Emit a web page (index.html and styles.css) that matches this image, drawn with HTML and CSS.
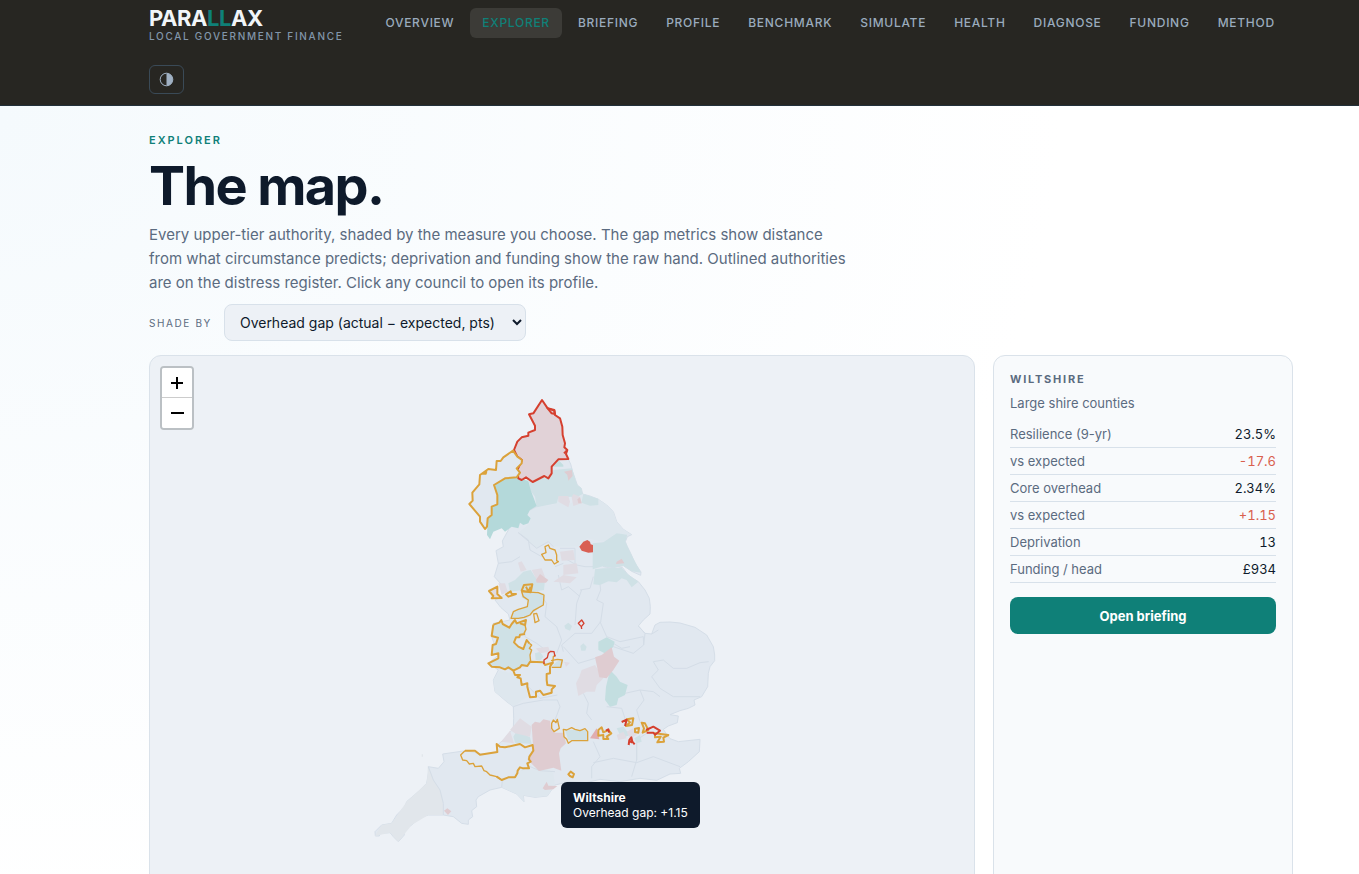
FILE: index.html
```html
<!DOCTYPE html>
<html lang="en">
<head>
<meta charset="utf-8">
<title>Parallax – Explorer</title>
<link rel="stylesheet" href="styles.css">
</head>
<body>
<header class="site-header">
  <div class="wrap header-row">
    <a class="brand" href="#">
      <span class="brand-name">PARA<span class="brand-accent">LL</span>AX</span>
      <span class="brand-sub">Local government finance</span>
    </a>
    <nav class="nav">
      <a href="#">Overview</a>
      <a href="#" class="active">Explorer</a>
      <a href="#">Briefing</a>
      <a href="#">Profile</a>
      <a href="#">Benchmark</a>
      <a href="#">Simulate</a>
      <a href="#">Health</a>
      <a href="#">Diagnose</a>
      <a href="#">Funding</a>
      <a href="#">Method</a>
    </nav>
    <button class="theme-toggle" type="button" aria-label="Toggle theme">
      <svg width="15" height="15" viewBox="0 0 15 15" aria-hidden="true"><circle cx="7.5" cy="7.5" r="6.3" fill="none" stroke="currentColor" stroke-width="1"/><path d="M7.5 1.2a6.3 6.3 0 0 1 0 12.6z" fill="currentColor"/></svg>
    </button>
  </div>
</header>
<main class="wrap main">
  <p class="eyebrow">Explorer</p>
  <h1>The map.</h1>
  <p class="lead">Every upper-tier authority, shaded by the measure you choose. The gap metrics show distance from what circumstance predicts; deprivation and funding show the raw hand. Outlined authorities are on the distress register. Click any council to open its profile.</p>
  <div class="controls">
    <label for="metric">Shade by</label>
    <select id="metric"><option>Overhead gap (actual − expected, pts)</option></select>
  </div>
  <div class="layout">
    <section class="map" aria-label="Map of England">
      <div class="map-canvas">
        <svg class="england" viewBox="-870 -102 2472 1860" aria-hidden="true">
          <path class="base" d="M385 208L392 222 398 245 406 268 412 285 424 295 428 312 450 318 475 328 500 345 520 365 530 395 550 418 575 434 562 440 556 455 562 470 572 490 585 520 603 546 602 556 575 544 550 527 520 533 489 529 520 537 547 532 563 553 576 563 595 575 615 600 628 625 631 650 630 672 610 690 595 708 615 730 635 732 645 705 660 697 690 696 720 699 765 712 800 735 820 770 824 795 824 812 810 830 805 850 803 890 785 920 762 930 765 945 745 955 720 962 690 974 715 978 712 998 685 1008 670 1018 678 1030 690 1046 715 1055 780 1048 778 1085 745 1115 718 1135 722 1150 690 1152 650 1171 600 1165 540 1175 480 1168 440 1178 390 1175 345 1185 322 1218 285 1222 250 1216 252 1235 230 1212 185 1192 150 1200 115 1220 108 1230 110 1250 95 1262 98 1280 85 1290 85 1303 65 1300 40 1280 10 1275-35 1275-60 1283-85 1305-110 1322-107 1335-125 1355-140 1340-150 1328-180 1330-182 1338-194 1338-195 1325-175 1305-145 1300-130 1275-105 1250-100 1235-65 1205-40 1180-35 1150-35 1130-5 1135 12 1115 8 1092 78 1082 125 1092 172 1088 172 1065 190 1050 220 1015 221 985 220 950 200 935 165 905 160 870 175 840 145 820 175 795 155 740 160 700 210 690 205 672 182 652 165 630 185 620 205 608 190 590 163 560 175 520 168 482 190 470 187 453 205 420 270 270 335 230 350 208Z"/>
          <path class="pale" d="M270 360L290 350 340 345 355 325 390 342 428 312 475 328 500 345 520 365 530 395 550 418 575 434 530 430 490 455 440 445 430 470 360 470 340 470 325 455 290 475 235 428 270 400ZM165 905L160 870 180 842 220 850 265 890 262 920 220 950Z"/>
          <path class="corn" d="M-35 1130L-20 1170 0 1200 10 1240 10 1275-35 1275-85 1305-125 1355-150 1328-195 1338-175 1305-145 1300-100 1235-40 1180Z"/>
          <path class="pale" d="M185 1168L245 1140 320 1135 340 1150 345 1185 322 1218 285 1222 250 1216 252 1235 230 1212 185 1192Z"/>
          <g class="line">
            <path d="M-35 1130L-20 1170 0 1200 10 1240 10 1275M185 1192L187 1170M245 1140L270 1130 300 1142 345 1145M480 583L482 600 470 630 490 640 482 695 455 730 405 730 365 765 370 785M405 705L410 640 425 600M300 545L290 600 320 640 315 680 350 710 365 750 350 790M480 695L500 740 540 755 610 740 611 765 580 790 520 770M258 700L255 740 290 760 330 790M520 760L545 775 570 770M595 708L615 730 611 765M635 732L655 720M640 815L670 810 700 835 740 835 780 818 806 815M640 815L655 840 635 860 660 895 700 920 780 920M555 910L600 900 640 905 660 920M600 900L612 930 590 960 600 995M352 930L360 950 345 990M430 910L445 940 440 970 455 990M500 950L545 955 560 1000M220 950L250 940 310 930 352 930M460 1055L480 1100 455 1130 455 1165M460 1118L520 1105 590 1118 640 1100 720 1130M590 1060L590 1110 575 1160M235 428L265 450 270 480 305 500M175 520L215 515 240 500M360 475L405 475 405 545M365 500L410 525 435 530 460 530M355 555L365 600 385 590 420 620M345 530L370 520M460 560L450 595 420 600M270 360L290 350 355 325M235 428L290 475 325 455 340 470M265 890L300 925 352 915M370 770L415 820 465 805M620 1030L590 1050 590 1110"/>
          </g>
          <g class="teal-l">
            <path d="M268 275L300 265 325 262 340 240 396 235 406 268 412 285 424 295 428 312 405 325 395 320 355 322 350 340 290 352 285 320 270 300Z"/>
            <path d="M430 312L475 326 475 345 450 347 424 338Z"/>
            <path d="M458 460L490 457 530 430 562 434 556 455 572 490 603 548 575 544 550 527 520 533 489 529 458 538Z"/>
            <path d="M465 538L490 535 545 533 563 553 595 575 575 592 560 570 545 565 530 577 505 574 480 585 460 583Z"/>
            <path d="M205 580L225 570 250 545 272 540 285 560 315 570 312 600 280 605 245 600 210 605Z"/>
            <path d="M245 600L312 610 312 642 260 685 213 688 220 665 262 650 265 635 245 622Z"/>
            <path d="M285 790L300 785 310 800 300 812 287 810ZM373 707L385 698 396 708 390 722 376 716ZM421 768L430 760 440 770 436 782 424 782Z"/>
            <path d="M160 704L178 698 184 690 188 702 208 713 225 690 230 700 258 690 256 705 256 732 228 742 222 757 235 770 250 777 260 750 268 760 275 780 270 795 272 815 270 825 240 832 220 842 180 832 155 830 145 820 175 805 175 790 155 795 158 765 168 762 174 743 155 738Z"/>
            <path d="M220 1040L230 1023 245 1030 270 1042 275 1062 225 1058Z"/>
            <path d="M350 815L368 808 366 832 335 830ZM375 1020L440 1020 445 1052 385 1050ZM530 1015L550 1010 570 1035 545 1045ZM583 1045L600 1035 605 1055 590 1060Z"/>
          </g>
          <g class="teal-m">
            <path d="M510 840L530 860 540 875 563 885 555 915 535 925 530 945 510 950 495 930 498 890Z"/>
            <path d="M475 755L500 742 524 755 520 770 498 792 475 780ZM340 230L355 210 370 225 370 230Z"/>
          </g>
          <g class="pink-l">
            <path d="M355 318L385 318 390 335 385 352 355 335ZM395 322L400 312 420 320 425 340 400 348Z"/>
            <path d="M234 518L245 514 260 540 242 545ZM275 540L305 535 315 560 290 570ZM340 575L370 555 410 562 390 580ZM175 580L195 580 203 605 185 615ZM360 485L400 480 405 510 365 512ZM370 525L410 520 415 550 370 555Z"/>
            <path d="M425 840L465 825 490 865 470 885 465 905 440 905 415 918 408 880 418 860ZM288 775L325 770 330 785 300 790ZM372 815L390 818 378 830Z"/>
            <path d="M210 1020L240 985 275 1010 270 1040 225 1030ZM183 1055L210 1022 222 1060Z"/>
            <path d="M530 1035L550 1025 560 1045 535 1050ZM560 1025L580 1015 590 1035 570 1045Z"/>
          </g>
          <g class="pink-m">
            <path d="M465 802L485 795 515 772 522 800 538 812 520 840 500 865 478 862Z"/>
            <path d="M372 245L396 240 398 258 385 272 382 255ZM412 328L420 322 425 340 415 340ZM530 515L545 506 553 520 528 522ZM288 570L300 552 325 570 318 578 290 578Z"/>
            <path d="M275 1005L285 995 300 998 310 988 330 992 333 1018 345 1028 370 1028 378 1060 362 1075 357 1090 364 1142 340 1133 297 1143 262 1108 280 1080Z"/>
            <path d="M308 1195L320 1175 325 1187 352 1188 340 1198 315 1200ZM12 1262L22 1255 34 1264 24 1275Z"/>
          </g>
          <path class="coral" d="M450 1045L470 1015 478 1048Z"/>
          <path class="teal" d="M232 262L245 268 265 272 272 300 290 348 270 360 262 375 272 385 265 400 250 405 240 398 235 415 215 410 195 425 185 415 160 425 150 448 141 435 143 385 155 350 172 343 172 315 162 285 195 265Z"/>
          <path class="red-fill" d="M418 470L430 455 442 450 450 455 452 463 459 465 459 487 445 488 425 482Z"/>
          <path class="northumberland" d="M306 30L323 55 343 62 345 75 360 85 367 110 368 135 375 160 373 172 382 180 378 192 385 207 355 208 335 230 335 250 325 265 313 258 278 276 258 262 245 270 235 265 232 240 246 210 232 200 222 180 232 155 245 142 265 137 265 128 285 120 285 107 267 73 280 70Z"/>
          <g class="amber">
            <path class="cumbria" d="M219 182L190 202 182 213 170 213 168 240 145 237 120 255 118 283 97 308 98 332 88 342 120 380 120 395 135 417 141 410 143 385 155 375 155 350 172 343 172 315 162 285 195 265 230 262 240 248 230 235 245 220 246 210 232 200Z"/>
            <path class="thin" d="M128 252L140 245 138 252ZM305 493L318 488 315 470 325 465 330 475 345 480 350 495 350 512 355 515 343 522 335 510 315 510Z"/>
            <path class="shade" d="M147 603L172 590 172 612 185 624 155 625 160 618Z"/>
            <path d="M198 613L212 604 215 612 228 612 205 620ZM252 585L277 583 272 607 245 602ZM258 590L265 605 272 590"/>
            <path class="thin" d="M245 605L250 620 265 630 262 650 245 655 235 658 220 665 213 685 235 685 252 682 270 675 280 662 310 645 312 615 295 608 280 607ZM281 672L290 670 297 692 285 698ZM333 812L352 808 367 810 362 832 335 832"/>
            <path d="M160 704L178 698 184 690 188 702 208 713 215 702 225 690 230 700 258 690 255 705 240 700M255 732L240 734 238 742 228 742 222 757 235 770 250 777 260 750 268 760"/>
            <path d="M160 704L155 738 174 743 168 762 158 765 155 795 175 790 175 805 145 820 155 830 180 832 195 838 205 832 220 842 240 832 245 825 262 828 270 815 310 817 315 825 338 818 330 830 330 850 320 852 320 870 322 885 345 888 335 898 335 908 310 915 300 902 288 905 288 920 270 922 262 890 262 880 245 885 242 865 232 862 240 855 225 855 220 842"/>
            <path class="thin" d="M255 705L258 718 252 730M268 760L275 765 268 775 275 780 270 795 272 815M338 822L340 800 347 795"/>
            <path d="M75 1082L105 1082 120 1094 172 1086 170 1062 180 1070 195 1072 240 1062 255 1072 278 1065 280 1082 268 1100 267 1108 272 1115 262 1120 267 1135 250 1135 240 1132 233 1142 232 1150 225 1162 205 1162 185 1170 170 1160"/>
            <path class="thin" d="M75 1082L62 1095 68 1110 80 1112 88 1122 100 1120 105 1130 125 1128 132 1142 140 1145 150 1155 170 1160 185 1170M335 1000L340 990 348 998 352 988 358 1015 342 1025 335 1015ZM370 1018L380 1020 395 1013 405 1018 420 1022 435 1016 443 1025 443 1052 395 1052 385 1060 380 1048 372 1040Z"/>
            <path d="M385 1153L392 1145 402 1152 398 1162 390 1158ZM475 1020L485 1012 490 1027 505 1020 514 1030 500 1040 505 1047 490 1047 490 1035 475 1037ZM560 988L580 985 576 1005 558 1008 570 997ZM585 1016L597 1014 595 1028 585 1026ZM605 998L615 1000 625 1020 608 1028 612 1015ZM645 1030L685 1035 670 1043 672 1055 652 1057 662 1040 645 1042Z"/>
          </g>
          <g class="red">
            <path class="thin" d="M415 700L425 690 432 700 424 710ZM424 710L425 717M312 822L312 810 322 803 325 790 332 784 342 785 345 800"/>
            <path d="M545 996L560 989 555 1008M498 1022L505 1018 507 1028M618 1020L640 1010 660 1022 645 1034 640 1028 620 1028M566 1065L568 1050 574 1042 577 1055 584 1063M568 1052L576 1058"/>
            <path d="M323 55L343 60 345 72 335 70ZM372 190L380 182"/>
          </g>
          <path class="corn" d="M-55 1093h4v7h-4z"/>
        </svg>
        <div class="tooltip" role="tooltip"><strong>Wiltshire</strong><br>Overhead gap: +1.15</div>
      </div>
      <div class="zoom">
        <button type="button" aria-label="Zoom in"><svg width="14" height="14" viewBox="0 0 14 14" aria-hidden="true"><path d="M7 1v12M1 7h12" stroke="#000" stroke-width="2"/></svg></button>
        <button type="button" aria-label="Zoom out"><svg width="14" height="14" viewBox="0 0 14 14" aria-hidden="true"><path d="M1 7h13" stroke="#000" stroke-width="2"/></svg></button>
      </div>
    </section>
    <aside class="panel">
      <h2>Wiltshire</h2>
      <p class="kind">Large shire counties</p>
      <table>
        <tbody>
          <tr><th scope="row">Resilience (9-yr)</th><td>23.5%</td></tr>
          <tr><th scope="row">vs expected</th><td class="bad">-17.6</td></tr>
          <tr><th scope="row">Core overhead</th><td>2.34%</td></tr>
          <tr><th scope="row">vs expected</th><td class="bad">+1.15</td></tr>
          <tr><th scope="row">Deprivation</th><td>13</td></tr>
          <tr><th scope="row">Funding / head</th><td>£934</td></tr>
        </tbody>
      </table>
      <button class="primary" type="button">Open briefing</button>
    </aside>
  </div>
</main>
</body>
</html>
```
FILE: styles.css
```css
* { box-sizing: border-box; }
html { overflow: hidden; height: 100%; }
body {
  margin: 0;
  height: 100%;
  overflow: hidden;
  font-family: Inter, "Liberation Sans", sans-serif;
  font-size: 16px;
  line-height: 1.5;
  color: #0e1a2b;
  background: radial-gradient(ellipse 1060px 800px at 0 120px, #f5fafd, #fff) #fff;
}
a { color: inherit; text-decoration: none; }
button, select { font-family: inherit; cursor: pointer; }
.wrap { padding: 0 66px 0 149px; max-width: 1440px; }

.site-header { background: #272622; border-bottom: 1px solid #22303a; }
.header-row {
  display: flex;
  flex-wrap: wrap;
  align-items: center;
  column-gap: 30px;
  row-gap: 19px;
  padding-bottom: 11px;
}
.brand { display: flex; flex-direction: column; padding: 6px 0 3px; }
.brand-name { font-size: 22px; font-weight: 700; line-height: 24px; letter-spacing: -0.02em; color: #f1f5f9; }
.brand-accent { color: #0f8078; }
.brand-sub { font-size: 10px; line-height: 13px; font-weight: 500; letter-spacing: 0.17em; text-transform: uppercase; color: #8296ab; }
.nav { display: flex; gap: 4px; }
.nav a {
  padding: 6px 12px;
  border-radius: 6px;
  font-size: 12px;
  line-height: 18px;
  font-weight: 500;
  letter-spacing: 0.06em;
  text-transform: uppercase;
  color: #9aabbd;
}
.nav .active { background: #3c3b37; color: #0f8078; }
.theme-toggle {
  display: flex;
  align-items: center;
  justify-content: center;
  width: 35px;
  height: 29px;
  padding: 0;
  border: 1px solid #3a4a57;
  border-radius: 6px;
  background: none;
  color: #9fb0c3;
}

.main { padding-top: 26px; }
.eyebrow { margin: 0; font-size: 11px; line-height: 16px; font-weight: 600; letter-spacing: 0.18em; text-transform: uppercase; color: #0f8078; }
h1 { margin: 10px 0 9px; font-size: 54px; line-height: 56px; font-weight: 700; letter-spacing: -0.03em; }
.lead { margin: 0; max-width: 700px; font-size: 15px; line-height: 24px; color: #5b6b80; }
.controls { display: flex; align-items: center; gap: 12px; margin: 9px 0 14px; }
.controls label { font-size: 10px; letter-spacing: 0.16em; text-transform: uppercase; color: #5b6b80; padding-top: 2px; }
.controls select {
  height: 37px;
  padding: 0 14px 0 11px;
  border: 1px solid #d8e1ea;
  border-radius: 8px;
  background: #edf1f6;
  color: #0e1a2b;
  font-size: 14px;
}

.layout { display: grid; grid-template-columns: minmax(0, 1fr) 300px; gap: 18px; }
.map, .panel { border: 1px solid #dae2ea; border-radius: 12px; }
.map { position: relative; min-height: 620px; overflow: hidden; background: #edf1f6; display: flex; justify-content: center; }
.map-canvas { position: relative; width: 824px; flex: none; }
.england { display: block; width: 100%; }
.england path { stroke-linejoin: round; }
.base { fill: #e1e8f0; stroke: #d5dee8; stroke-width: 3; }
.pale { fill: #dee7ee; }
.corn { fill: #e1e6eb; }
.line { fill: none; stroke: #d4dde7; stroke-width: 3; }
.teal-l { fill: #cfe1e6; }
.teal-m { fill: #c3dee0; }
.teal { fill: #b4d9da; }
.pink-l { fill: #e0dce3; }
.pink-m { fill: #dfccd1; }
.coral { fill: #e0adb0; }
.red-fill { fill: #d95f53; }
.northumberland { fill: #e1d2d7; stroke: #d5402f; stroke-width: 6; }
.amber { fill: none; stroke: #dba23b; stroke-width: 6; }
.amber .cumbria { fill: #e1e8f0; }
.amber .shade { fill: #e0dce3; }
.red { fill: none; stroke: #d5402f; stroke-width: 6; }
.amber .thin, .red .thin { stroke-width: 4; }

.tooltip {
  position: absolute;
  left: 411px;
  top: 426px;
  padding: 8px 12px;
  border-radius: 6px;
  background: #0e1a2b;
  color: #fff;
  font-size: 12px;
  line-height: 15px;
  white-space: nowrap;
}
.zoom {
  position: absolute;
  left: 10px;
  top: 10px;
  border: 2px solid #bbc0c4;
  border-radius: 4px;
  overflow: hidden;
}
.zoom button { display: flex; align-items: center; justify-content: center; width: 30px; height: 30px; padding: 0; border: 0; background: #fff; }
.zoom button:first-child { border-bottom: 1px solid #ccc; }

.panel { padding: 14px 16px; background: #f8fafc; }
.panel h2 { margin: 0; font-size: 11px; line-height: 18px; font-weight: 700; letter-spacing: 0.16em; text-transform: uppercase; color: #5b6b80; }
.kind { margin: 5px 0 8px; font-size: 13px; line-height: 20px; color: #5b6b80; }
.panel table { width: 100%; border-collapse: separate; border-spacing: 0; font-size: 13px; line-height: 20px; }
.panel th, .panel td { height: 27px; padding: 3px 0; border-bottom: 1px solid #d8e1ea; }
.panel th { text-align: left; font-weight: 400; color: #5b6b80; }
.panel td { text-align: right; font-variant-numeric: tabular-nums; }
.panel .bad { color: #d9604e; }
.primary {
  width: 100%;
  height: 37px;
  margin-top: 14px;
  border: 0;
  border-radius: 8px;
  background: #0f8078;
  color: #fff;
  font-size: 13px;
  font-weight: 700;
}
```
